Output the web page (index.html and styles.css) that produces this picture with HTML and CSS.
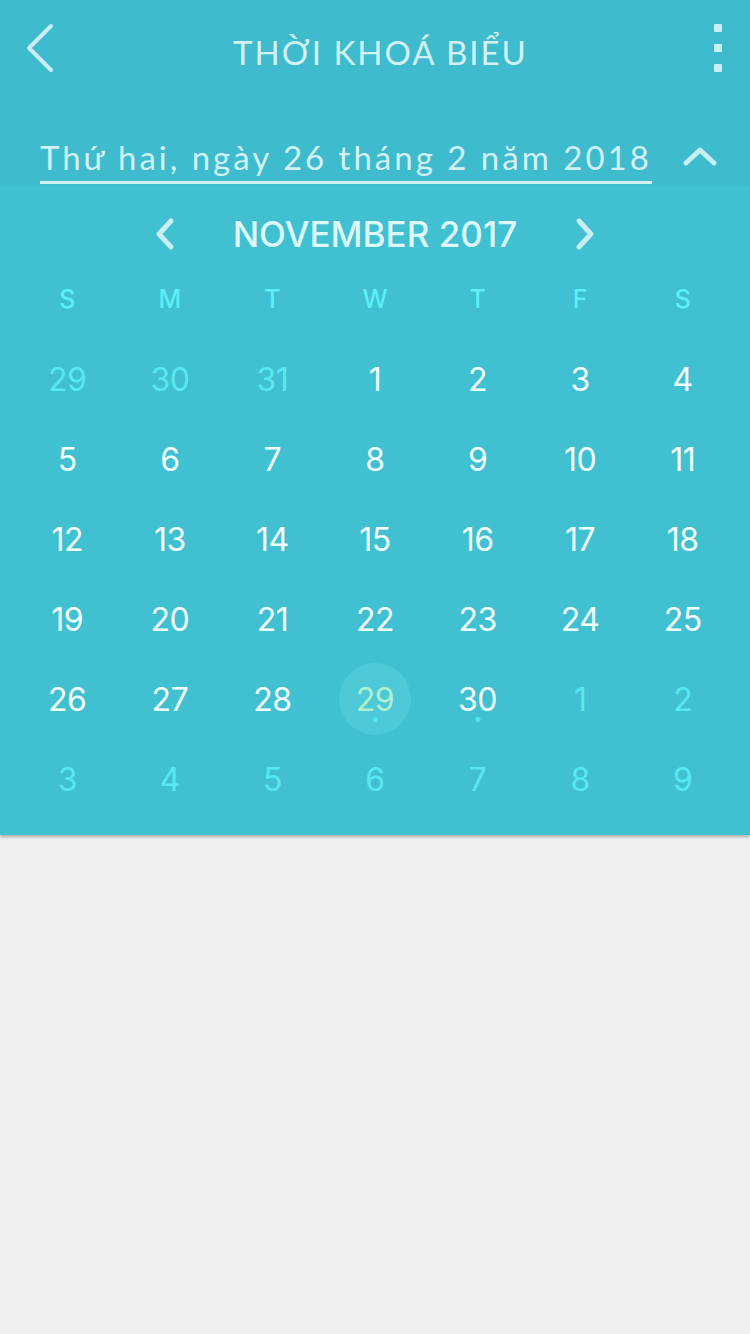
FILE: index.html
```html
<!DOCTYPE html>
<html>
<head>
<meta charset="utf-8">
<link rel="stylesheet" href="styles.css">
</head>
<body>
<div class="app">
  <div class="top">
    <div class="navbar">
      <svg class="back" width="30" height="50" viewBox="0 0 30 50"><path d="M26 3 L4 25 L26 47" fill="none" stroke="#c9eef2" stroke-width="4" stroke-linecap="round" stroke-linejoin="round"/></svg>
      <div class="title">THỜI KHOÁ BIỂU</div>
      <div class="more"><span></span><span></span><span></span></div>
    </div>
    <div class="dateline">
      <div class="datetext">Thứ hai, ngày 26 tháng 2 năm 2018</div>
      <svg class="up" width="36" height="22" viewBox="0 0 36 22"><path d="M4 18 L18 5 L32 18" fill="none" stroke="#c9eef2" stroke-width="5" stroke-linecap="round" stroke-linejoin="round"/></svg>
    </div>
  </div>
  <div class="calendar">
    <div class="monthbar">
      <svg width="24" height="34" viewBox="0 0 24 34"><path d="M18 4 L6 17 L18 30" fill="none" stroke="#c9eef2" stroke-width="5" stroke-linecap="round" stroke-linejoin="round"/></svg>
      <div class="month">NOVEMBER 2017</div>
      <svg width="24" height="34" viewBox="0 0 24 34"><path d="M6 4 L18 17 L6 30" fill="none" stroke="#c9eef2" stroke-width="5" stroke-linecap="round" stroke-linejoin="round"/></svg>
    </div>
    <div class="weekdays">
      <span>S</span><span>M</span><span>T</span><span>W</span><span>T</span><span>F</span><span>S</span>
    </div>
    <div class="days">
      <span class="other">29</span><span class="other">30</span><span class="other">31</span><span>1</span><span>2</span><span>3</span><span>4</span>
      <span>5</span><span>6</span><span>7</span><span>8</span><span>9</span><span>10</span><span>11</span>
      <span>12</span><span>13</span><span>14</span><span>15</span><span>16</span><span>17</span><span>18</span>
      <span>19</span><span>20</span><span>21</span><span>22</span><span>23</span><span>24</span><span>25</span>
      <span>26</span><span>27</span><span>28</span><span class="selected event">29</span><span class="event">30</span><span class="other">1</span><span class="other">2</span>
      <span class="other">3</span><span class="other">4</span><span class="other">5</span><span class="other">6</span><span class="other">7</span><span class="other">8</span><span class="other">9</span>
    </div>
  </div>
</div>
</body>
</html>
```
FILE: styles.css
```css
html, body {
  margin: 0;
  padding: 0;
}
body {
  background: #efefef;
  width: 750px;
  height: 1334px;
  overflow: hidden;
  font-family: Inter, "Noto Sans", sans-serif;
}
.app {
  display: flex;
  flex-direction: column;
}
.top {
  background: #3ebbcc;
  height: 186px;
  display: flex;
  flex-direction: column;
}
.navbar {
  height: 104px;
  display: flex;
  align-items: center;
  justify-content: space-between;
  padding: 0 28px 0 25px;
}
.back {
  display: block;
  margin-top: -8px;
}
.title {
  font-family: Lato, "Noto Sans", sans-serif;
  font-size: 33px;
  font-weight: 400;
  letter-spacing: 2px;
  color: #d2f1f4;
  margin-top: 0;
  margin-left: -8px;
}
.more {
  display: flex;
  flex-direction: column;
  gap: 12px;
  margin-top: -8px;
}
.more span {
  width: 8px;
  height: 8px;
  background: #c9eef2;
  border-radius: 1px;
}
.dateline {
  display: flex;
  align-items: center;
  justify-content: space-between;
  padding: 32px 32px 0 40px;
}
.datetext {
  font-family: Lato, "Noto Sans", sans-serif;
  font-size: 33px;
  letter-spacing: 3px;
  color: #d2f1f4;
  border-bottom: 3px solid #d2f1f4;
  line-height: 42px;
  padding-bottom: 3px;
  white-space: nowrap;
  flex-shrink: 0;
}
.up {
  display: block;
  margin-top: -8px;
}
.calendar {
  background: #40c0d0;
  height: 649px;
  box-shadow: 0 2px 3px rgba(0,0,0,0.28);
  padding: 0 16px;
  display: flex;
  flex-direction: column;
}
.monthbar {
  height: 96px;
  display: flex;
  align-items: center;
  justify-content: center;
  gap: 56px;
}
.monthbar svg {
  display: block;
}
.month {
  font-size: 35px;
  font-weight: 500;
  color: #dcf9fb;
  letter-spacing: 0;
}
.weekdays {
  display: grid;
  grid-template-columns: repeat(7, 1fr);
  height: 38px;
  align-items: center;
  margin-top: -2px;
}
.weekdays span {
  text-align: center;
  font-size: 25px;
  font-weight: 500;
  color: #5eeef5;
}
.days {
  display: grid;
  grid-template-columns: repeat(7, 1fr);
  grid-auto-rows: 80px;
  margin-top: 21px;
}
.days span {
  display: flex;
  align-items: center;
  justify-content: center;
  font-size: 32px;
  font-weight: 400;
  color: #f2ffff;
  position: relative;
  letter-spacing: -0.5px;
}
.days span.other {
  color: #5ae8f0;
}
.days span.selected {
  color: #c6f5c2;
}
.days span.selected::before {
  content: "";
  position: absolute;
  width: 72px;
  height: 72px;
  border-radius: 50%;
  background: rgba(110, 225, 235, 0.28);
  left: 50%;
  top: 50%;
  transform: translate(-50%, -50%);
  z-index: 0;
}
.days span.event::after {
  content: "";
  position: absolute;
  width: 5px;
  height: 5px;
  border-radius: 50%;
  background: #55e3ee;
  left: 50%;
  top: 58px;
  transform: translateX(-50%);
}
```
